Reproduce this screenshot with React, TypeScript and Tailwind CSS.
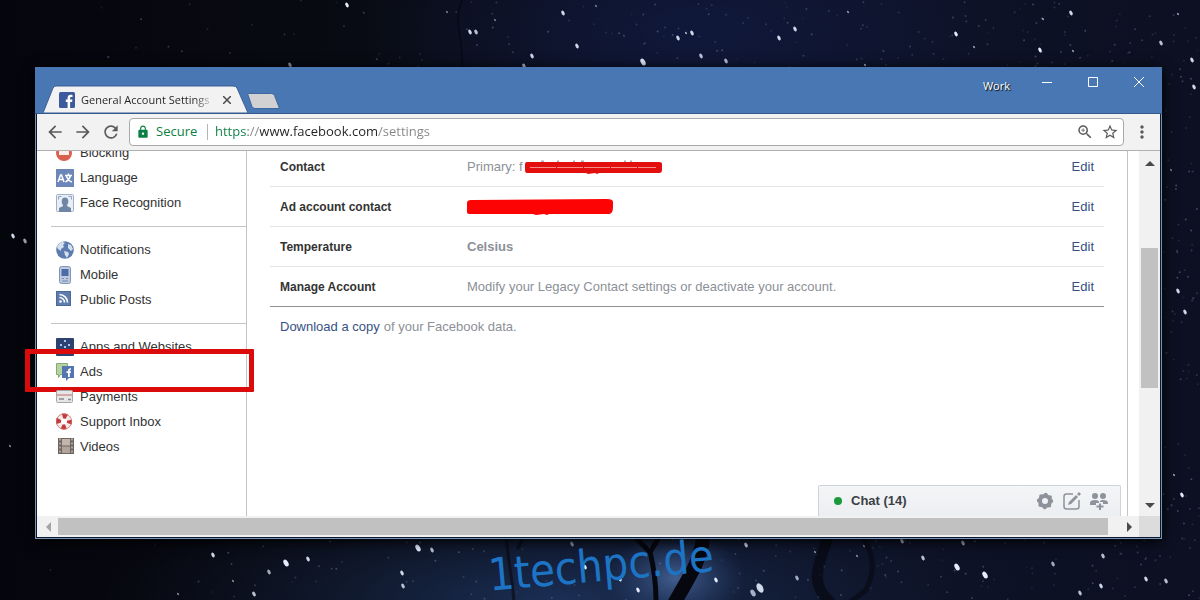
import type { ReactNode } from 'react';
import {
  MdArrowBack,
  MdArrowForward,
  MdLock,
  MdMoreVert,
  MdRefresh,
  MdStarBorder,
  MdZoomIn,
} from 'react-icons/md';

// x, y, radius, opacity
const brightStars = [
  [347, 5, 2, 1], [470, 32, 2, 0.9], [476, 32, 2, 0.8], [563, 13, 2, 0.9], [577, 46, 2, 0.9],
  [532, 56, 2, 0.9], [524, 66, 2, 0.8], [686, 33, 1, 0.9], [678, 38, 2, 0.9], [692, 33, 2, 0.9],
  [643, 62, 3, 1], [701, 56, 2, 0.8], [726, 61, 2, 0.8], [779, 38, 2, 0.9], [795, 29, 2, 0.9],
  [848, 12, 1, 0.8], [956, 34, 2, 1], [974, 47, 1, 0.8], [1040, 50, 2, 1], [1043, 19, 1, 0.8],
  [1071, 13, 2, 0.9], [1073, 51, 1, 0.8], [1161, 43, 2, 0.8], [1178, 14, 1, 0.8], [1192, 60, 2, 0.9],
  [865, 65, 1, 0.9], [447, 12, 1, 0.6], [495, 20, 1, 0.6], [596, 6, 1, 0.6], [290, 65, 2, 0.6],
  [13, 236, 2, 0.9], [25, 241, 2, 0.7], [10, 446, 1, 0.7], [1178, 291, 2, 0.9], [1185, 312, 2, 0.9],
  [1171, 170, 1, 0.6], [1194, 87, 2, 0.9], [1182, 495, 2, 1], [1174, 475, 1, 0.8],
  [213, 555, 2, 0.9], [286, 563, 3, 1], [308, 559, 2, 0.9], [418, 548, 3, 1], [432, 550, 2, 0.8],
  [402, 573, 2, 0.9], [403, 586, 2, 0.8], [269, 572, 2, 0.7], [233, 581, 1, 0.7], [178, 594, 1, 0.7],
  [254, 594, 2, 0.8], [585, 567, 2, 1], [572, 544, 2, 0.6], [746, 545, 2, 0.9], [716, 580, 2, 1],
  [760, 588, 4, 0.9], [753, 593, 3, 0.7], [797, 578, 2, 0.7], [815, 552, 1, 0.7], [857, 556, 1, 0.7],
  [902, 541, 2, 0.8], [864, 546, 1, 0.6], [923, 558, 2, 0.8], [957, 567, 3, 1], [985, 575, 3, 1],
  [963, 543, 2, 0.7], [1053, 564, 2, 0.7], [1146, 579, 2, 0.9], [1166, 581, 2, 0.8],
  [1101, 586, 2, 0.9], [1080, 593, 2, 0.8], [1103, 556, 2, 0.8], [620, 579, 2, 1], [638, 590, 2, 1],
];

const faintStars = Array.from({ length: 1400 }, (_, i) => {
  const a = Math.abs(Math.sin(i * 12.9898 + 4.1) * 43758.5453) % 1;
  const b = Math.abs(Math.sin(i * 78.233 + 1.7) * 24634.6345) % 1;
  return { x: 1200 * Math.sqrt(a), y: b * 600, o: 0.08 + (((i * 37) % 100) / 100) * 0.25 };
});

function NightSky() {
  return (
    <svg
      className="absolute inset-0 h-full w-full"
      viewBox="0 0 1200 600"
      preserveAspectRatio="xMidYMid slice"
      aria-hidden="true"
    >
      <defs>
        <radialGradient id="glowTop">
          <stop offset="0" stopColor="#10183a" />
          <stop offset="1" stopColor="#10183a" stopOpacity="0" />
        </radialGradient>
        <radialGradient id="glowBottom">
          <stop offset="0" stopColor="#1b2f55" />
          <stop offset="1" stopColor="#101a30" stopOpacity="0" />
        </radialGradient>
        <radialGradient id="glowTree">
          <stop offset="0" stopColor="#5f86c4" stopOpacity="0.6" />
          <stop offset="1" stopColor="#3a5b93" stopOpacity="0" />
        </radialGradient>
        <linearGradient id="night">
          <stop offset="0" stopColor="#05050c" />
          <stop offset="0.3" stopColor="#090b14" />
          <stop offset="0.6" stopColor="#0e1328" />
          <stop offset="1" stopColor="#0c1022" />
        </linearGradient>
      </defs>
      <rect width="1200" height="600" fill="url(#night)" />
      <ellipse cx="700" cy="30" rx="330" ry="130" fill="url(#glowTop)" />
      <ellipse cx="560" cy="600" rx="460" ry="120" fill="url(#glowBottom)" />
      <ellipse cx="676" cy="578" rx="70" ry="45" fill="url(#glowTree)" />
      {faintStars.map((s, i) => (
        <circle key={i} cx={s.x} cy={s.y} r="1" fill="#a9b6dc" opacity={s.o} />
      ))}
      {brightStars.map(([x, y, r, o]) => (
        <ellipse
          key={`${x}-${y}`}
          cx={x}
          cy={y}
          rx={r * 0.75}
          ry={r * 1.25}
          fill="#e6edff"
          opacity={o}
          transform={`rotate(-28 ${x} ${y})`}
        />
      ))}
      <g fill="none" stroke="#07080f" strokeLinecap="round">
        <path d="M656 602 C656 575 652 560 650 552 L634 536 M650 552 L660 536" strokeWidth="5" />
        <path d="M674 604 C690 575 702 560 704 530" strokeWidth="14" />
        <path d="M514 602 C512 575 508 560 506 536 M518 548 L524 536" strokeWidth="3" opacity="0.6" />
        <path d="M830 602 C806 580 822 560 828 536" strokeWidth="11" opacity="0.7" />
        <path d="M862 536 C878 560 872 578 866 590 L850 602" strokeWidth="5" opacity="0.6" />
        <path d="M462 0 C452 22 464 40 462 68" strokeWidth="2" opacity="0.7" />
      </g>
    </svg>
  );
}

function FacebookMark({ className }: { className?: string }) {
  return (
    <svg className={className} viewBox="0 0 16 16" aria-hidden="true">
      <rect width="16" height="16" rx="1.5" fill="#3b5b9c" />
      <path
        d="M8.6 16V10H6.8V7.6h1.8V6c0-2.1 1.2-3.2 3.1-3.2.8 0 1.4.1 1.8.2v2.1h-1.2c-1 0-1.2.5-1.2 1.2v1.3h2.3l-.3 2.4h-2V16z"
        fill="#fff"
      />
    </svg>
  );
}

function Icon({ children }: { children: ReactNode }) {
  return (
    <svg className="h-[18px] w-[18px] shrink-0" viewBox="0 0 18 18" aria-hidden="true">
      {children}
    </svg>
  );
}

const icons = {
  blocking: (
    <Icon>
      <circle cx="8" cy="9" r="8" fill="#d7604f" />
      <rect x="3" y="7" width="10" height="4" fill="#fbeeea" />
    </Icon>
  ),
  language: (
    <Icon>
      <rect width="18" height="18" fill="#6c86b8" />
      <path d="M2 13 4.500 6h1L8 13M3 10.500h4" stroke="#fff" strokeWidth="1.500" fill="none" />
      <path d="M9 6.500h7M12.500 4.500v2M9.500 13c3-1.500 4.300-4 5-6.500M10.500 7c.5 3 2.500 5 5.500 6" stroke="#fff" strokeWidth="1.500" fill="none" />
    </Icon>
  ),
  face: (
    <Icon>
      <rect x=".5" y=".5" width="17" height="17" rx="1" fill="#e9eef6" stroke="#9fb0c9" />
      <path d="M2.500 5.500v-3h3M12.500 2.500h3v3" stroke="#8fa2bf" fill="none" />
      <ellipse cx="9" cy="7.500" rx="3.300" ry="4" fill="#6f87a5" />
      <path d="M7 9h4v3l4 2v4H3v-4l4-2z" fill="#6f87a5" />
    </Icon>
  ),
  globe: (
    <Icon>
      <circle cx="9" cy="9" r="8.800" fill="#5c7cb0" />
      <path d="M1 6C2 3 5 1 7 1l2 1-2 2 1 2-3 2v2L2 8zM8 10l4 1 1 2-2 4-2-3zM12 3l3 1 2 4-2 2-3-3z" fill="#d5e0ef" />
    </Icon>
  ),
  mobile: (
    <Icon>
      <rect x="3.500" y=".5" width="11" height="17" rx="2" fill="#bcc9df" stroke="#7f95b9" />
      <rect x="5.500" y="3" width="7" height="7" fill="#4d6ba6" />
      <path d="M6 12.500h2M10 12.500h2M6 15h6" stroke="#7187ae" />
    </Icon>
  ),
  feed: (
    <Icon>
      <rect x=".5" y=".5" width="14" height="14" fill="#5f7cae" stroke="#4b6797" />
      <circle cx="4.500" cy="10.500" r="1.300" fill="#fff" />
      <path d="M3.500 6.500a5 5 0 0 1 5 5M3.500 3.500a8 8 0 0 1 8 8" stroke="#fff" strokeWidth="1.600" fill="none" />
    </Icon>
  ),
  apps: (
    <Icon>
      <rect width="18" height="18" rx="1" fill="#2c4270" />
      <path d="M8 2h2v2H8zM4 6h2v2H4zM12 6h2v2h-2zM8 8h2v2H8zM3 11h2v2H3zM13 11h2v2h-2z" fill="#a9c3ea" />
    </Icon>
  ),
  ads: (
    <Icon>
      <path d="M.5.5h11v11h-7l-2 3v-3h-2z" fill="#b4d3a0" stroke="#87a877" />
      <path d="M6 3h12v12h-5l-3 3v-3H6z" fill="#5475b0" />
      <path d="M12 14v-4h-1.500V8.300H12V7.500C12 6 13 5 15 5.200v1.600c-1 0-1.200.2-1.200 1v.5H15L14.800 10h-1v4z" fill="#fff" />
    </Icon>
  ),
  payments: (
    <Icon>
      <rect x=".5" y="2.500" width="16" height="12" rx="1" fill="#e6e6e6" stroke="#a8a8a8" />
      <path d="M1 7h15" stroke="#c06c68" />
      <path d="M3 11h5M12 11.500h3" stroke="#8a8a8a" strokeWidth="1.500" />
    </Icon>
  ),
  support: (
    <Icon>
      <circle cx="8" cy="8.500" r="5.500" fill="none" stroke="#f3e9e8" strokeWidth="5" />
      <circle cx="8" cy="8.500" r="5.500" fill="none" stroke="#c23a3a" strokeWidth="5" strokeDasharray="4.320" strokeDashoffset="2.160" />
      <circle cx="8" cy="8.500" r="7.700" fill="none" stroke="#cf6d6a" strokeWidth=".8" />
    </Icon>
  ),
  videos: (
    <Icon>
      <rect x="2" y="0" width="16" height="16" fill="#6e6561" />
      <rect x="6" y="1" width="8" height="6.500" fill="#c2b6ad" />
      <rect x="6" y="8.500" width="8" height="6.500" fill="#b1a49b" />
      <path d="M4 .5v16M16 .5v16" stroke="#c4bbb4" strokeWidth="1.500" strokeDasharray="2" />
    </Icon>
  ),
};

const menu = [
  [
    { label: 'Blocking', icon: icons.blocking },
    { label: 'Language', icon: icons.language },
    { label: 'Face Recognition', icon: icons.face },
  ],
  [
    { label: 'Notifications', icon: icons.globe },
    { label: 'Mobile', icon: icons.mobile },
    { label: 'Public Posts', icon: icons.feed },
  ],
  [
    { label: 'Apps and Websites', icon: icons.apps },
    { label: 'Ads', icon: icons.ads, marked: true },
    { label: 'Payments', icon: icons.payments },
    { label: 'Support Inbox', icon: icons.support },
    { label: 'Videos', icon: icons.videos },
  ],
];

const settings = [
  {
    name: 'Contact',
    value: (
      <span className="flex items-center">
        Primary: f
        <svg className="h-4 w-[139px]" viewBox="0 0 139 16" aria-hidden="true">
          <path d="M18 2.500h3M34 2.500h2M50 2.500h2M58 2.500h3M101 2.500h2M107 2.500h2" stroke="#a9adb3" strokeWidth="2" />
          <path d="M4 3h132q3 0 3 2v6q0 3-3 3H76l-2 1-2-1-7 1-2-1H4q-2 0-2-3V5q0-2 2-2z" fill="#e30f0f" />
          <path d="M7 8.500h126" stroke="#f08f8a" strokeDasharray="26 1" />
        </svg>
      </span>
    ),
  },
  {
    name: 'Ad account contact',
    value: (
      <svg className="h-4 w-[147px]" viewBox="0 0 147 16" aria-hidden="true">
        <path d="M4 1 140 0q6 0 6 3v5q0 7-4 7H82l-2 1-3-1-8 1-3-1H2q-2 0-2-2V4q0-3 4-3z" fill="#fd0303" />
      </svg>
    ),
  },
  { name: 'Temperature', value: <strong>Celsius</strong> },
  { name: 'Manage Account', value: 'Modify your Legacy Contact settings or deactivate your account.' },
];

function TitleBar() {
  return (
    <header className="flex h-[47px] items-end border-b border-[#34598f] bg-[#4877b3]">
      <div className="relative ml-2 flex h-7 w-[206px] items-center gap-1.5 pt-0.5 pr-3.5 pl-4">
        <svg className="absolute inset-0 h-full w-full" viewBox="0 0 206 28" preserveAspectRatio="none" aria-hidden="true">
          <path d="M0 28 10 3q1-2 3-2h177q3 0 4 2l11 25z" fill="#f2f2f2" stroke="#3a5f94" />
        </svg>
        <FacebookMark className="relative h-4 w-4 shrink-0" />
        <span className="relative flex-1 bg-linear-to-r from-[#222] from-85% to-[#e4e4e4] bg-clip-text text-[11px] whitespace-nowrap text-transparent">
          General Account Settings
        </span>
        <button type="button" aria-label="Close tab" className="relative flex h-4 w-4 items-center justify-center">
          <svg className="h-2 w-2" viewBox="0 0 8 8" aria-hidden="true">
            <path d="M0 0 8 8M8 0 0 8" stroke="#4a4a4a" strokeWidth="1.500" />
          </svg>
        </button>
      </div>
      <button type="button" aria-label="New tab" className="-ml-1 mb-1 flex">
        <svg className="h-4 w-[35px]" viewBox="0 0 35 16" aria-hidden="true">
          <path d="M2.500.5h24q2 0 3 2l5 13H10q-2 0-3-2z" fill="#d1d1d3" stroke="#3f679f" />
        </svg>
      </button>
      <div className="ml-auto flex self-start">
        <button type="button" className="mr-3.5 pt-2 text-[11px] text-white [text-shadow:1px_1px_1px_#000]">
          Work
        </button>
        <button type="button" aria-label="Minimize" className="flex h-[30px] w-[46px] items-center justify-center">
          <svg className="h-2.5 w-2.5" viewBox="0 0 10 10" aria-hidden="true">
            <path d="M0 5.500h10" stroke="#fff" />
          </svg>
        </button>
        <button type="button" aria-label="Maximize" className="flex h-[30px] w-[46px] items-center justify-center">
          <svg className="h-2.5 w-2.5" viewBox="0 0 10 10" aria-hidden="true">
            <path d="M.5.5h9v9h-9z" stroke="#fff" fill="none" />
          </svg>
        </button>
        <button type="button" aria-label="Close" className="flex h-[30px] w-[46px] items-center justify-center">
          <svg className="h-2.5 w-2.5" viewBox="0 0 10 10" aria-hidden="true">
            <path d="M0 0 10 10M10 0 0 10" stroke="#fff" />
          </svg>
        </button>
      </div>
    </header>
  );
}

function Toolbar() {
  return (
    <div className="relative z-10 flex h-[37px] items-center border-b border-[#b0b0b0] bg-[#f2f2f2] px-2 text-[#5a5a5a]">
      <div className="mr-2 flex gap-2">
        <button type="button" aria-label="Back"><MdArrowBack className="h-5 w-5" /></button>
        <button type="button" aria-label="Forward"><MdArrowForward className="h-5 w-5" /></button>
        <button type="button" aria-label="Reload"><MdRefresh className="h-5 w-5" /></button>
      </div>
      <div className="flex h-7 flex-1 items-center rounded-sm border border-[#a9a9a9] bg-white pr-1 pl-1.5">
        <MdLock className="h-3.5 w-3.5 text-[#0b8043]" />
        <span className="ml-1.5 w-[45px] text-[13px] text-[#0b8043]">Secure</span>
        <span className="mr-[7px] ml-1.5 h-4 w-px bg-[#b5b5b5]" />
        <input
          type="text"
          aria-label="Address"
          defaultValue="https://www.facebook.com/settings"
          className="min-w-0 flex-1 bg-[linear-gradient(90deg,#0b8043_33px,#858585_33px,#858585_45px,#222_45px,#222_163px,#858585_163px)] bg-clip-text text-[13px] text-transparent outline-none"
        />
        <button type="button" aria-label="Zoom" className="mr-[7px]"><MdZoomIn className="h-[18px] w-[18px]" /></button>
        <button type="button" aria-label="Bookmark this page"><MdStarBorder className="h-[18px] w-[18px]" /></button>
      </div>
      <button type="button" aria-label="Menu" className="ml-2"><MdMoreVert className="h-5 w-5" /></button>
    </div>
  );
}

function Sidebar() {
  return (
    <nav className="w-[210px] shrink-0 border-r border-[#c4c4c4] pl-3.5">
      <div className="-mt-[11px]">
        {menu.map((group, i) => (
          <ul key={i} className="border-b border-[#c4c4c4] pt-[10px] pb-[11px] first:pt-0 last:border-b-0">
            {group.map((item) => (
              <li key={item.label} className="relative">
                <a href="#" className="flex h-[25px] items-center gap-1.5 pl-[5px] text-[#333]">
                  {item.icon}
                  {item.label}
                </a>
                {item.marked && (
                  <span className="absolute -inset-x-2 -top-2.5 -bottom-2 -left-[26px] rounded-[1px] border-5 border-[#dc0b0b]" />
                )}
              </li>
            ))}
          </ul>
        ))}
      </div>
    </nav>
  );
}

function ChatBar() {
  return (
    <div className="absolute right-1.5 bottom-0 flex h-[31px] w-[303px] items-center rounded-t-xs border border-b-0 border-[#cfd2d6] bg-linear-to-b from-[#f4f5f7] to-[#eceef1] px-3">
      <span className="mx-[3px] h-2 w-2 rounded-full bg-[#1a9a3c]" />
      <span className="ml-1.5 font-bold text-[#3b3f47]">Chat (14)</span>
      <div className="ml-auto flex gap-[9px] text-[#8d929b]">
        <button type="button" aria-label="Options">
          <svg className="h-[18px] w-[18px]" viewBox="0 0 18 18" aria-hidden="true">
            <circle cx="9" cy="9" r="5" fill="none" stroke="currentColor" strokeWidth="4" />
            <circle
              cx="9"
              cy="9"
              r="6.200"
              fill="none"
              stroke="currentColor"
              strokeWidth="4"
              strokeLinecap="round"
              strokeDasharray="0 4.870"
            />
          </svg>
        </button>
        <button type="button" aria-label="New message">
          <svg className="h-[18px] w-[18px]" viewBox="0 0 18 18" aria-hidden="true">
            <path d="M10 2H3.500Q1 2 1 4.500v10Q1 17 3.500 17h10q2.500 0 2.500-2.500V8" fill="none" stroke="currentColor" strokeWidth="1.500" />
            <path d="m5 13 1-3 7-7 2 2-7 7zM14 2l2-2 2 2-2 2z" fill="currentColor" />
          </svg>
        </button>
        <button type="button" aria-label="Add to chat">
          <svg className="h-[18px] w-[18px]" viewBox="0 0 18 18" aria-hidden="true">
            <circle cx="5" cy="4" r="3" fill="currentColor" />
            <circle cx="13" cy="4" r="3" fill="currentColor" />
            <path d="M0 13V11q0-3 5-3 4 0 4 2v1H6v2zM18 12v-1q0-3-5-3-2 0-3 1v1h3v2z" fill="currentColor" />
            <path d="M10 11.500v6.500M6.500 14.500h7" stroke="currentColor" strokeWidth="2" />
          </svg>
        </button>
      </div>
    </div>
  );
}

function Settings() {
  return (
    <main className="relative mr-[11px] min-w-0 flex-1 border-r border-[#c4c4c4] px-[23px]">
      <ul className="-mt-1 border-b border-[#8f9092]">
        {settings.map((row) => (
          <li
            key={row.name}
            className="flex h-10 items-center border-b border-[#e5e5e5] px-2.5 last:h-[39px] last:border-b-0"
          >
            <span className="w-[187px] text-xs font-bold text-[#333]">{row.name}</span>
            <span className="flex-1 text-[#8c9097]">{row.value}</span>
            <a href="#" className="text-[#365183]">Edit</a>
          </li>
        ))}
      </ul>
      <p className="flex h-10 items-center gap-1 px-2.5 text-[#8c9097]">
        <a href="#" className="text-[#365183]">Download a copy</a>
        of your Facebook data.
      </p>
      <ChatBar />
    </main>
  );
}

function Arrow({ d, dim }: { d: string; dim?: boolean }) {
  return (
    <svg className="h-2.5 w-2.5" viewBox="0 0 10 10" aria-hidden="true">
      <path d={d} fill={dim ? '#a3a3a3' : '#4a4a4a'} />
    </svg>
  );
}

function VerticalScrollbar() {
  return (
    <div className="flex w-[21px] shrink-0 flex-col items-center bg-[#f1f1f1]">
      <button type="button" aria-label="Scroll up" className="flex h-[23px] items-center">
        <Arrow d="M0 8 5 3l5 5z" />
      </button>
      <div className="flex w-[17px] flex-1 flex-col">
        <div className="flex-[74]" />
        <div className="flex-[140] bg-[#c1c1c1]" />
        <div className="flex-[105]" />
      </div>
      <button type="button" aria-label="Scroll down" className="flex h-[23px] items-center">
        <Arrow d="M0 3h10L5 8z" />
      </button>
    </div>
  );
}

function HorizontalScrollbar() {
  return (
    <div className="flex h-[21px] bg-[#f1f1f1]">
      <button type="button" aria-label="Scroll left" className="flex w-[21px] items-center justify-center">
        <Arrow d="M8 0v10L3 5z" dim />
      </button>
      <div className="my-0.5 flex-1 bg-[#c1c1c1]" />
      <div className="w-2.5" />
      <button type="button" aria-label="Scroll right" className="flex w-[21px] items-center justify-center">
        <Arrow d="M3 0v10l5-5z" />
      </button>
      <div className="w-[21px] bg-[#dcdcdc]" />
    </div>
  );
}

export default function App() {
  return (
    <div className="relative flex min-h-screen flex-col overflow-hidden bg-[#090b14] pt-[67px] pr-[38px] pb-[61px] pl-[35px] font-['Open_Sans',sans-serif]">
      <NightSky />
      <div className="relative flex flex-1 flex-col shadow-[0_2px_12px_#000]">
        <TitleBar />
        <div className="flex flex-1 flex-col border border-t-0 border-[#7896b4] bg-[#0b1730] px-px pb-px">
          <Toolbar />
          <div className="flex flex-1 bg-white font-['Liberation_Sans',sans-serif] text-[13px]">
            <Sidebar />
            <Settings />
            <VerticalScrollbar />
          </div>
          <HorizontalScrollbar />
        </div>
      </div>
      <div className="absolute bottom-3 left-1/2 -ml-[112px] -rotate-5 font-['DejaVu_Sans_Condensed','DejaVu_Sans',sans-serif] text-[45px] leading-none text-[#1d74c5]">
        1techpc.de
      </div>
    </div>
  );
}
